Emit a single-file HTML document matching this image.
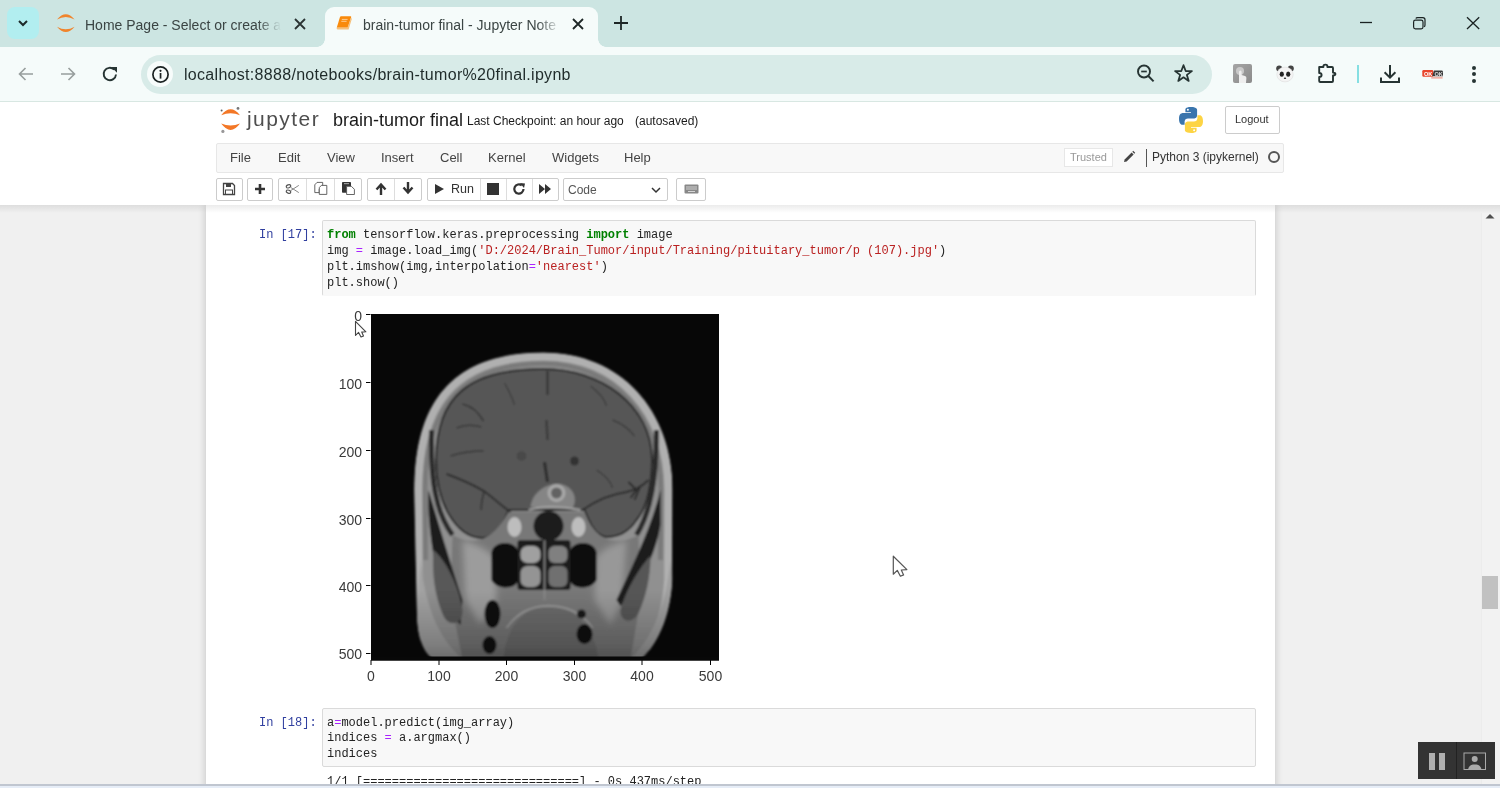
<!DOCTYPE html>
<html><head><meta charset="utf-8">
<style>
*{box-sizing:border-box}
html,body{margin:0;padding:0;width:1500px;height:788px;overflow:hidden;background:#f0f0f0;font-family:"Liberation Sans",sans-serif}
.a{position:absolute}
#tabs{left:0;top:0;width:1500px;height:47px;background:#cce5e2}
#toolbar{left:0;top:47px;width:1500px;height:54px;background:#f5fbfa}
#omni{left:141px;top:54.5px;width:1071px;height:39px;border-radius:19.5px;background:#d8ebe8}
.tabt{font-size:14px;color:#3b4544;white-space:nowrap;overflow:hidden;-webkit-mask-image:linear-gradient(90deg,#000 88%,transparent 100%);mask-image:linear-gradient(90deg,#000 88%,transparent 100%)}
#header{left:0;top:100.5px;width:1500px;height:104.5px;background:#fff;border-top:1.5px solid #d8e7e2}
#site{left:0;top:205px;width:1500px;height:583px;background:#f0f0f0;overflow:hidden}
#nb{left:206px;top:0;width:1069px;height:600px;background:#fff;box-shadow:0 0 8px rgba(0,0,0,.2)}
#hshadow{left:0;top:205px;width:1500px;height:8px;background:linear-gradient(rgba(0,0,0,.08),rgba(0,0,0,0))}
.menu{font-size:13px;color:#444;top:150px}
.btn{top:178px;height:23px;border:1px solid #ccc;border-radius:2px;background:#fff}
.code{font-family:"Liberation Mono",monospace;font-size:12px;line-height:15.8px;color:#222;white-space:pre}
.prompt{font-family:"Liberation Mono",monospace;font-size:12px;color:#303f9f;white-space:pre}
.cell{background:#f8f8f8;border:1px solid #dadada;border-radius:2px}
.k{color:#008000;font-weight:bold}
.o{color:#aa22ff}
.s{color:#ba2121}
.tick{font-size:14px;line-height:16px;color:#3a3a3a}
</style></head><body>
<div id="wrap" style="position:absolute;left:0;top:0;width:1500px;height:788px;overflow:hidden;filter:blur(0.4px)">
<!-- tab strip -->
<div id="tabs" class="a"></div>
<div class="a" style="left:7px;top:7px;width:32px;height:32px;border-radius:8px;background:#b2eef0"></div>
<svg class="a" style="left:17px;top:17px" width="12" height="12" viewBox="0 0 12 12"><path d="M2 4 L6 8 L10 4" fill="none" stroke="#1d2a2a" stroke-width="2"/></svg>
<!-- inactive tab -->
<svg class="a" style="left:50px;top:8px" width="30" height="30" viewBox="50 8 30 30"><path d="M57 19.6 Q65.8 9 74.6 19.6 Q65.8 14.5 57 19.6Z" fill="#f0842c"/><path d="M57 26.7 Q65.8 37.5 74.6 26.7 Q65.8 31.8 57 26.7Z" fill="#f0842c"/></svg>
<div class="a tabt" style="left:85px;top:16.5px;width:196px;height:20px">Home Page - Select or create a</div>
<svg class="a" style="left:293px;top:17px" width="14" height="14" viewBox="0 0 14 14"><path d="M2 2 L12 12 M12 2 L2 12" stroke="#2a3333" stroke-width="1.8"/></svg>
<!-- active tab -->
<div class="a" style="left:325px;top:7px;width:273px;height:41px;background:#f5fbfa;border-radius:9px 9px 0 0"></div>
<div class="a" style="left:317px;top:39px;width:8px;height:8px;background:radial-gradient(circle at 0 0,#cce5e2 7.5px,#f5fbfa 8px)"></div>
<div class="a" style="left:598px;top:39px;width:8px;height:8px;background:radial-gradient(circle at 100% 0,#cce5e2 7.5px,#f5fbfa 8px)"></div>
<svg class="a" style="left:334px;top:14px" width="20" height="18" viewBox="334 14 20 18"><path d="M336.8 27.6 H347.6 L351.2 17.8 L351.8 19 L348.6 29.6 H337.6 Q336.2 29.4 336.8 27.6Z" fill="#f6c07a"/><path d="M341 16.2 H350.6 Q351.4 16.2 351.1 17.2 L347.6 27.6 H336.8 L340 17Q340.3 16.2 341 16.2Z" fill="#f98a0b"/><path d="M341.8 19.4 H347.6 M341.3 21.3 H346.6" stroke="#fdd4a0" stroke-width="0.9"/></svg>
<div class="a tabt" style="left:363px;top:16.5px;width:198px;height:20px">brain-tumor final - Jupyter Note</div>
<svg class="a" style="left:571px;top:17px" width="14" height="14" viewBox="0 0 14 14"><path d="M2 2 L12 12 M12 2 L2 12" stroke="#1d2626" stroke-width="1.8"/></svg>
<svg class="a" style="left:613px;top:15px" width="16" height="16" viewBox="0 0 16 16"><path d="M8 1 V15 M1 8 H15" stroke="#1d2626" stroke-width="1.8"/></svg>
<!-- window controls -->
<svg class="a" style="left:1358px;top:15px" width="16" height="16" viewBox="0 0 16 16"><path d="M2 7.5 H14" stroke="#1a2222" stroke-width="1.3"/></svg>
<svg class="a" style="left:1411px;top:15px" width="16" height="16" viewBox="0 0 16 16"><rect x="2.6" y="5.2" width="9.4" height="8.6" rx="1.8" fill="none" stroke="#1a2222" stroke-width="1.2"/><path d="M4.8 3.4 Q5.2 2.6 6.6 2.6 H11.8 Q14 2.6 14 4.8 V10 Q14 11.3 13.1 11.8" fill="none" stroke="#1a2222" stroke-width="1.2"/></svg>
<svg class="a" style="left:1465px;top:15px" width="16" height="16" viewBox="0 0 16 16"><path d="M2 2.3 L14.2 14 M14.2 2.3 L2 14" stroke="#1a2222" stroke-width="1.3"/></svg>
<!-- toolbar -->
<div id="toolbar" class="a"></div>
<div id="omni" class="a"></div>
<div class="a" style="left:147px;top:61px;width:26px;height:26px;border-radius:13px;background:#f7fcfb"></div>
<div class="a" style="left:184px;top:65.5px;font-size:16px;letter-spacing:0.3px;color:#1f2b2a;white-space:nowrap">localhost:8888/notebooks/brain-tumor%20final.ipynb</div>
<!-- nav icons -->
<svg class="a" style="left:17px;top:65px" width="18" height="18" viewBox="0 0 18 18"><path d="M16 9 H3 M8.5 3 L2.5 9 L8.5 15" fill="none" stroke="#979e9d" stroke-width="1.6"/></svg>
<svg class="a" style="left:59px;top:65px" width="18" height="18" viewBox="0 0 18 18"><path d="M2 9 H15 M9.5 3 L15.5 9 L9.5 15" fill="none" stroke="#979e9d" stroke-width="1.6"/></svg>
<svg class="a" style="left:101px;top:65px" width="18" height="18" viewBox="0 0 18 18"><path d="M15 9.5 A6.2 6.2 0 1 1 13.2 4.6" fill="none" stroke="#263433" stroke-width="1.9"/><path d="M10.3 2 H16 V7.7Z" fill="#263433"/></svg>
<svg class="a" style="left:151px;top:65px" width="19" height="19" viewBox="0 0 19 19"><circle cx="9.5" cy="9.5" r="7.6" fill="none" stroke="#1a2222" stroke-width="1.7"/><rect x="8.7" y="8" width="1.7" height="5.6" fill="#1a2222"/><circle cx="9.5" cy="5.8" r="1.1" fill="#1a2222"/></svg>
<svg class="a" style="left:1135px;top:63px" width="22" height="22" viewBox="0 0 22 22"><circle cx="9" cy="8.5" r="6" fill="none" stroke="#263433" stroke-width="1.9"/><path d="M13.3 13 L18.6 18.4" stroke="#263433" stroke-width="2"/><path d="M6.2 8.5 H11.8" stroke="#263433" stroke-width="1.7"/></svg>
<svg class="a" style="left:1173px;top:63px" width="21" height="21" viewBox="0 0 21 21"><path d="M10.5 2.2 L12.7 8 L18.9 8.1 L13.9 11.9 L15.7 17.9 L10.5 14.3 L5.3 17.9 L7.1 11.9 L2.1 8.1 L8.3 8Z" fill="none" stroke="#263433" stroke-width="1.8" stroke-linejoin="round"/></svg>
<!-- extensions -->
<div class="a" style="left:1233px;top:64px;width:19px;height:19px;border-radius:2px;background:linear-gradient(135deg,#a5a5a5,#8a8a8a)"></div>
<svg class="a" style="left:1233px;top:64px" width="19" height="19" viewBox="0 0 19 19"><circle cx="7" cy="7" r="4" fill="#c9c9c9"/><path d="M6 19 V8 Q6 6.5 7.3 6.5 Q8.6 6.5 8.6 8 V11 L12 12 Q13.5 12.5 13.4 14 L13 19Z" fill="#eee"/></svg>
<svg class="a" style="left:1275px;top:64px" width="20" height="19" viewBox="0 0 20 19"><circle cx="4.2" cy="4.6" r="3" fill="#444"/><circle cx="15.8" cy="4.6" r="3" fill="#444"/><ellipse cx="10" cy="10.5" rx="8.2" ry="7.4" fill="#f4f4f4" stroke="#ddd" stroke-width="0.6"/><ellipse cx="6.8" cy="10.2" rx="2.1" ry="2.6" fill="#222"/><ellipse cx="13.2" cy="10.2" rx="2.1" ry="2.6" fill="#222"/><ellipse cx="10" cy="14.3" rx="1.2" ry="0.8" fill="#222"/></svg>
<svg class="a" style="left:1316px;top:62px" width="22" height="22" viewBox="0 0 22 22"><path d="M3.2 5 H7.4 Q7.2 2.6 9.4 2.6 Q11.6 2.6 11.4 5 H16 Q17 5 17 6 V10.6 Q19.4 10.6 19.4 12 Q19.4 13.4 17 13.4 V19 Q17 20 16 20 H4.2 Q3.2 20 3.2 19 V15 Q5.6 15 5.6 13 Q5.6 11 3.2 11Z" fill="none" stroke="#263433" stroke-width="1.9" stroke-linejoin="round"/></svg>
<div class="a" style="left:1357px;top:65px;width:2px;height:18px;background:#86dfe2"></div>
<svg class="a" style="left:1379px;top:63px" width="22" height="22" viewBox="0 0 22 22"><path d="M11 2 V14.5 M5.6 9.2 L11 14.6 L16.4 9.2" fill="none" stroke="#263433" stroke-width="2"/><path d="M2 14.5 V19 H20 V14.5" fill="none" stroke="#263433" stroke-width="2"/></svg>
<svg class="a" style="left:1420px;top:68px" width="26" height="13" viewBox="1420 68 26 13">
<rect x="1422.3" y="70.1" width="11" height="6.6" rx="1.2" fill="#e8452c"/>
<path d="M1434 70.6 H1441.6 Q1443 70.6 1443 72 V76.2 H1432.2Z" fill="#3a3a3a"/>
<rect x="1431.2" y="76.8" width="11.4" height="1.9" fill="#f2b3a8"/>
<text x="1424" y="75.8" font-family="Liberation Sans" font-weight="bold" font-size="5.6" fill="#fff">OK</text>
<text x="1434.5" y="75.6" font-family="Liberation Sans" font-weight="bold" font-size="5.6" fill="#ddd">OK</text>
</svg>
<div class="a" style="left:1472px;top:65.5px;width:4px;height:4px;border-radius:2px;background:#263433"></div>
<div class="a" style="left:1472px;top:72px;width:4px;height:4px;border-radius:2px;background:#263433"></div>
<div class="a" style="left:1472px;top:78.5px;width:4px;height:4px;border-radius:2px;background:#263433"></div>
<div id="header" class="a"></div>
<!-- jupyter logo -->
<svg class="a" style="left:215px;top:103px" width="30" height="32" viewBox="215 103 30 32">
<path d="M221.2 115.2 Q230.6 103.5 240 115.2 Q230.6 111.5 221.2 115.2Z" fill="#f37726"/>
<path d="M221.2 123.6 Q230.6 136.4 240 123.6 Q230.6 127.6 221.2 123.6Z" fill="#f37726"/>
<circle cx="238" cy="108.4" r="1.4" fill="#767677"/><circle cx="221.6" cy="110.6" r="1" fill="#616262"/><circle cx="222.9" cy="131.4" r="1.6" fill="#989798"/>
</svg>
<div class="a" style="left:247px;top:106.5px;font-size:21px;letter-spacing:1.45px;color:#4e4e4e">jupyter</div>
<div class="a" style="left:333px;top:110px;font-size:18px;color:#1a1a1a;white-space:nowrap">brain-tumor final</div>
<div class="a" style="left:467px;top:114px;font-size:12px;color:#1a1a1a;white-space:nowrap">Last Checkpoint: an hour ago</div>
<div class="a" style="left:635px;top:114px;font-size:12px;color:#1a1a1a;white-space:nowrap">(autosaved)</div>
<!-- python logo -->
<svg class="a" style="left:1177px;top:106px" width="28" height="28" viewBox="0 0 28 28">
<path d="M13.8 1 C8 1 8.4 3.5 8.4 3.5 V6.2 H14 V7 H6 C6 7 2 6.6 2 12.8 C2 19 5.5 18.8 5.5 18.8 H7.6 V15.9 C7.6 15.9 7.5 12.4 11 12.4 H16.8 C16.8 12.4 20.1 12.5 20.1 9.2 V3.9 C20.1 3.9 20.6 1 13.8 1Z" fill="#3a75ad"/>
<path d="M14.2 27 C20 27 19.6 24.5 19.6 24.5 V21.8 H14 V21 H22 C22 21 26 21.4 26 15.2 C26 9 22.5 9.2 22.5 9.2 H20.4 V12.1 C20.4 12.1 20.5 15.6 17 15.6 H11.2 C11.2 15.6 7.9 15.5 7.9 18.8 V24.1 C7.9 24.1 7.4 27 14.2 27Z" fill="#fdd444"/>
<circle cx="10.9" cy="3.8" r="1" fill="#fff"/><circle cx="17.1" cy="24.2" r="1" fill="#fff"/>
</svg>
<div class="a" style="left:1225px;top:106px;width:55px;height:28px;border:1px solid #ccc;border-radius:2px;background:#fff"></div>
<div class="a" style="left:1235px;top:113px;font-size:11px;color:#333">Logout</div>
<!-- menubar -->
<div class="a" style="left:216px;top:143px;width:1068px;height:30px;background:#f8f8f8;border:1px solid #e7e7e7;border-radius:2px"></div>
<div class="a menu" style="left:230px">File</div>
<div class="a menu" style="left:278px">Edit</div>
<div class="a menu" style="left:327px">View</div>
<div class="a menu" style="left:381px">Insert</div>
<div class="a menu" style="left:440px">Cell</div>
<div class="a menu" style="left:488px">Kernel</div>
<div class="a menu" style="left:552px">Widgets</div>
<div class="a menu" style="left:624px">Help</div>
<div class="a" style="left:1064px;top:148px;width:49px;height:19px;border:1px solid #e7e7e7;background:#fff"></div>
<div class="a" style="left:1070px;top:151px;font-size:11px;color:#999">Trusted</div>
<svg class="a" style="left:1122px;top:150px" width="14" height="14" viewBox="0 0 14 14"><path d="M2 12 L2.6 9.4 L9.6 2.4 L11.6 4.4 L4.6 11.4Z" fill="#444"/><path d="M10.3 1.7 L11.2 0.8 L13.2 2.8 L12.3 3.7Z" fill="#444"/></svg>
<div class="a" style="left:1146px;top:149px;width:1px;height:18px;background:#555"></div>
<div class="a" style="left:1152px;top:150px;font-size:12px;color:#333;white-space:nowrap">Python 3 (ipykernel)</div>
<div class="a" style="left:1268px;top:151px;width:12px;height:12px;border:2px solid #555;border-radius:50%"></div>
<!-- toolbar buttons -->
<div class="a btn" style="left:216px;width:27px"></div>
<div class="a btn" style="left:247px;width:26px"></div>
<div class="a btn" style="left:278px;width:84px"></div>
<div class="a" style="left:306px;top:179px;width:1px;height:21px;background:#ddd"></div>
<div class="a" style="left:334px;top:179px;width:1px;height:21px;background:#ddd"></div>
<div class="a btn" style="left:367px;width:55px"></div>
<div class="a" style="left:394px;top:179px;width:1px;height:21px;background:#ddd"></div>
<div class="a btn" style="left:427px;width:132px"></div>
<div class="a" style="left:480px;top:179px;width:1px;height:21px;background:#ddd"></div>
<div class="a" style="left:506px;top:179px;width:1px;height:21px;background:#ddd"></div>
<div class="a" style="left:532px;top:179px;width:1px;height:21px;background:#ddd"></div>
<div class="a btn" style="left:563px;width:105px"></div>
<div class="a" style="left:568px;top:183px;font-size:12px;color:#555">Code</div>
<svg class="a" style="left:650px;top:184px" width="12" height="12" viewBox="0 0 12 12"><path d="M2 4 L6 8 L10 4" fill="none" stroke="#333" stroke-width="1.5"/></svg>
<div class="a btn" style="left:676px;width:30px"></div>
<!-- icons -->
<svg class="a" style="left:222px;top:182px" width="14" height="14" viewBox="0 0 14 14"><path d="M1.5 1.5 H10.5 L12.5 3.5 V12.5 H1.5Z" fill="none" stroke="#444" stroke-width="1.3"/><rect x="4" y="1.5" width="5" height="3.5" fill="#444"/><rect x="3.5" y="8" width="7" height="4.5" fill="none" stroke="#444" stroke-width="1"/></svg>
<svg class="a" style="left:253px;top:182px" width="14" height="14" viewBox="0 0 14 14"><path d="M7 2 V12 M2 7 H12" stroke="#333" stroke-width="2.6"/></svg>
<svg class="a" style="left:284px;top:180px" width="80" height="18" viewBox="284 180 80 18">
<g transform="rotate(-20 288.5 186.3)"><ellipse cx="288.5" cy="186.3" rx="2.3" ry="1.5" fill="none" stroke="#555" stroke-width="1.1"/></g>
<g transform="rotate(20 288.5 191.7)"><ellipse cx="288.5" cy="191.7" rx="2.3" ry="1.5" fill="none" stroke="#555" stroke-width="1.1"/></g>
<path d="M290.5 187.3 L298.8 192.6 M290.5 190.7 L298.8 185.4" stroke="#888" stroke-width="1"/>
<path d="M317 182.4 H322.7 V186 L319.2 189.5 V192.6 H314.8 V184.8Z" fill="#fff" stroke="#555" stroke-width="0.9" stroke-linejoin="round"/>
<path d="M321.3 185.4 H326.8 V194.4 H319.3 V187.6Z" fill="#fff" stroke="#555" stroke-width="0.9" stroke-linejoin="round"/>
<rect x="342" y="182" width="9" height="10.8" rx="0.8" fill="#333"/>
<rect x="344" y="183" width="5" height="1.2" fill="#999"/>
<path d="M346.6 186.3 H351.4 L354.4 189.3 V194.5 H346.6Z" fill="#fff" stroke="#555" stroke-width="0.9" stroke-linejoin="round"/>
</svg>
<svg class="a" style="left:374px;top:182px" width="14" height="14" viewBox="0 0 14 14"><path d="M7 13 V3 M2.5 7.5 L7 2.5 L11.5 7.5" fill="none" stroke="#333" stroke-width="2.4"/></svg>
<svg class="a" style="left:401px;top:181px" width="14" height="14" viewBox="0 0 14 14"><path d="M7 1 V11 M2.5 6.5 L7 11.5 L11.5 6.5" fill="none" stroke="#333" stroke-width="2.4"/></svg>
<svg class="a" style="left:433px;top:183px" width="12" height="12" viewBox="0 0 12 12"><path d="M2 1 L11 6 L2 11Z" fill="#333"/></svg>
<div class="a" style="left:451px;top:182px;font-size:12.5px;color:#333">Run</div>
<div class="a" style="left:487px;top:183px;width:12px;height:12px;background:#333"></div>
<svg class="a" style="left:512px;top:182px" width="14" height="14" viewBox="0 0 14 14"><path d="M11.5 7 A4.6 4.6 0 1 1 9.8 3.4" fill="none" stroke="#333" stroke-width="2.2"/><path d="M8 1 L13 1.5 L12 6Z" fill="#333"/></svg>
<svg class="a" style="left:538px;top:183px" width="14" height="12" viewBox="0 0 14 12"><path d="M1 1 L7 6 L1 11Z M7 1 L13 6 L7 11Z" fill="#333"/></svg>
<svg class="a" style="left:684px;top:184px" width="15" height="10" viewBox="0 0 15 10"><rect x="0.5" y="0.5" width="14" height="9" rx="1" fill="#888"/><path d="M2 3 H13 M2 5 H13 M4 7.5 H11" stroke="#ddd" stroke-width="0.9"/></svg>
<div id="site" class="a"><div id="nb" class="a"></div></div>
<div id="hshadow" class="a"></div>
<!-- cell 17 -->
<div class="a prompt" style="left:259px;top:228.3px;line-height:15.8px">In [17]:</div>
<div class="a cell" style="left:322px;top:220px;width:934px;height:75.5px;border-bottom-color:transparent"></div>
<div class="a code" style="left:327px;top:228.3px"><span class="k">from</span> tensorflow.keras.preprocessing <span class="k">import</span> image
img <span class="o">=</span> image.load_img(<span class="s">'D:/2024/Brain_Tumor/input/Training/pituitary_tumor/p (107).jpg'</span>)
plt.imshow(img,interpolation<span class="o">=</span><span class="s">'nearest'</span>)
plt.show()</div>
<!-- figure -->
<svg class="a" style="left:330px;top:300px" width="400" height="390" viewBox="330 300 400 390">
<g stroke="#000" stroke-width="1">
<path d="M366 314.5 H370.5 M366 382.5 H370.5 M366 450.5 H370.5 M366 518.5 H370.5 M366 585.5 H370.5 M366 653.5 H370.5"/>
<path d="M371 660 V665 M439 660 V665 M506.5 660 V665 M574.5 660 V665 M642 660 V665 M710.5 660 V665"/>
</g>
</svg>
<div class="a tick" style="left:322px;top:308.3px;width:40px;text-align:right">0</div>
<div class="a tick" style="left:322px;top:375.8px;width:40px;text-align:right">100</div>
<div class="a tick" style="left:322px;top:443.8px;width:40px;text-align:right">200</div>
<div class="a tick" style="left:322px;top:511.8px;width:40px;text-align:right">300</div>
<div class="a tick" style="left:322px;top:578.8px;width:40px;text-align:right">400</div>
<div class="a tick" style="left:322px;top:646.3px;width:40px;text-align:right">500</div>
<div class="a tick" style="left:351.0px;top:668px;width:40px;text-align:center">0</div>
<div class="a tick" style="left:419.0px;top:668px;width:40px;text-align:center">100</div>
<div class="a tick" style="left:486.5px;top:668px;width:40px;text-align:center">200</div>
<div class="a tick" style="left:554.5px;top:668px;width:40px;text-align:center">300</div>
<div class="a tick" style="left:622.0px;top:668px;width:40px;text-align:center">400</div>
<div class="a tick" style="left:690.5px;top:668px;width:40px;text-align:center">500</div>
<!--MRI--><svg class="a" style="left:370.5px;top:314px" width="348" height="346.5" viewBox="370.5 314 348 346.5">
<defs>
<filter id="b1" x="-10%" y="-10%" width="120%" height="120%"><feGaussianBlur stdDeviation="1.3"/></filter>
<filter id="b3" x="-30%" y="-30%" width="160%" height="160%"><feGaussianBlur stdDeviation="3"/></filter>
<clipPath id="hc"><path d="M543 352.5 C620 352.5 672 410 672 490 L671.7 580 C670 612 660 640 641 659 L432 659 C421 650 417 635 416.5 614 L413.7 490 C413.7 410 445 352.5 543 352.5Z"/></clipPath>
<linearGradient id="bot" x1="0" y1="0" x2="0" y2="1"><stop offset="0" stop-color="#000" stop-opacity="0"/><stop offset="0.75" stop-color="#000" stop-opacity="0.22"/><stop offset="1" stop-color="#000" stop-opacity="0.35"/></linearGradient>
</defs>
<rect x="370.5" y="314" width="348" height="346.5" fill="#070707"/>
<g filter="url(#b1)"><g clip-path="url(#hc)">
<!-- head outer contour -->
<path d="M543 352.5 C620 352.5 672 410 672 490 L671.7 580 C670 612 660 640 641 659 L432 659 C421 650 417 635 416.5 614 L413.7 490 C413.7 410 445 352.5 543 352.5Z" fill="#909090"/>
<!-- skull band -->
<path d="M421 640 L418 580 L417.7 490 C417.7 412 447 356.5 543 356.5 C618 356.5 668 412 668 490 L667.7 580 C666 610 658 632 646 648" fill="none" stroke="#b0b0b0" stroke-width="8"/>
<path d="M425 560 L424.5 490 C424.5 416 454 363.5 543 363.5 C612 363.5 660.5 416 660.5 490 L660 560" fill="none" stroke="#7a7a7a" stroke-width="5"/>
<!-- brain -->
<path id="brain" d="M543 369 C600 369 651 405 651.5 460 C651 490 646 508 636 520 C628 532 618 537 606 537 C594 536 588 520 584 510 L508 510 C504 522 496 537 482 538 C468 538 456 528 447 512 C438 495 435.6 478 435.6 460 C435.6 395 470 369 543 369Z" fill="#575757"/>
<use href="#brain" fill="none" stroke="#262626" stroke-width="2"/>
<!-- side dark gap between brain and skull -->
<path d="M431 430 C430 480 435 512 452 535" fill="none" stroke="#2a2a2a" stroke-width="5"/>
<path d="M656 430 C656 480 650 512 636 535" fill="none" stroke="#2a2a2a" stroke-width="5"/>
<!-- lower central soft tissue -->
<path d="M452 535 C470 545 490 545 508 512 L584 512 C596 545 620 545 638 535 L640 600 L630 659 L462 659 L450 600Z" fill="#787878"/>
<g filter="url(#b3)"><path d="M462 540 C475 545 488 548 495 560 L496 600 L480 625 L465 600Z" fill="#9c9c9c"/>
<path d="M626 540 C613 545 600 548 595 560 L594 600 L610 625 L622 600Z" fill="#989898"/></g>
<!-- lower outer face light band -->
<path d="M420 560 C425 610 440 640 462 659 L432 659 C421 650 417 635 416.5 614Z" fill="#a2a2a2"/>
<path d="M670 560 C665 610 650 640 630 659 L641 658.5 C660 640 670 615 673 580Z" fill="#a0a0a0"/>
<!-- temporalis dark stripes + muscle -->
<path d="M428 490 C440 530 452 570 462 600 L460 625 C447 612 438 585 433 555 C429 530 427 510 428 490Z" fill="#1e1e1e"/>
<path d="M433 550 C445 560 458 585 462 610 C463 624 449 628 443 616 C436 600 431 580 433 550Z" fill="#585858"/>
<path d="M660 490 C650 530 630 570 616 600 L620 606 C640 585 655 555 660 525Z" fill="#1e1e1e"/>
<path d="M650 556 C640 566 625 590 620 610 C619 622 632 625 638 613 C645 598 650 578 650 556Z" fill="#575757"/>
<!-- sinuses -->
<path d="M491 552 C494 540 515 540 518 552 L518 580 C515 590 496 590 491 580Z" fill="#0a0a0a"/>
<path d="M596 552 C593 540 572 540 569 552 L569 580 C572 590 591 590 596 580Z" fill="#0a0a0a"/>
<!-- nasal -->
<rect x="517" y="540" width="53" height="50" rx="3" fill="#1c1c1c"/>
<rect x="520" y="546" width="20" height="17" rx="7" fill="#a0a0a0"/>
<rect x="520" y="566" width="20" height="21" rx="7" fill="#949494"/>
<rect x="548" y="546" width="19" height="17" rx="6" fill="#808080"/>
<rect x="548" y="566" width="19" height="21" rx="6" fill="#707070"/>
<path d="M544 540 V600" stroke="#8a8a8a" stroke-width="1.5"/>
<!-- bright clinoid structures -->
<ellipse cx="514" cy="527" rx="7" ry="10" fill="#bdbdbd"/>
<ellipse cx="578" cy="527" rx="7" ry="10" fill="#bdbdbd"/>
<ellipse cx="548" cy="526" rx="15" ry="15" fill="#1e1e1e"/>
<!-- tongue -->
<path d="M503 659 C505 627 525 605 548 605 C572 605 594 627 598 659Z" fill="#6c6c6c"/>
<path d="M506 628 C517 612 533 606 548 606 C564 606 582 612 592 628" fill="none" stroke="#999" stroke-width="2"/>
<!-- dark spots lower -->
<ellipse cx="492" cy="614" rx="8" ry="14" fill="#121212"/>
<ellipse cx="489" cy="645" rx="7" ry="9" fill="#121212"/>
<ellipse cx="581" cy="614" rx="4.5" ry="4.5" fill="#1c1c1c"/>
<ellipse cx="584" cy="634" rx="8" ry="10" fill="#121212"/>
<!-- tumor -->
<path d="M530 507 C532 492 545 484 558 484 C572 485 578 498 572 508Z" fill="#858585"/>
<circle cx="556" cy="493" r="9" fill="#a8a8a8"/>
<circle cx="556" cy="493" r="5.5" fill="#626262"/>
<path d="M528 510 C540 506 560 506 580 510" fill="none" stroke="#a5a5a5" stroke-width="1.8"/>
<!-- midline + sulci -->
<path d="M547 371 L547 395" stroke="#2e2e2e" stroke-width="2"/>
<path d="M546 420 L547 440" stroke="#3a3a3a" stroke-width="2.5"/>
<path d="M544 462 L547 482" stroke="#2a2a2a" stroke-width="3"/>
<circle cx="574" cy="461" r="4.5" fill="#333"/>
<circle cx="521" cy="456" r="5" fill="#4a4a4a"/>
<path d="M462 404 C470 406 478 412 483 421" fill="none" stroke="#333" stroke-width="1.6"/>
<path d="M456 428 C465 424 474 425 481 427" fill="none" stroke="#383838" stroke-width="1.4"/>
<path d="M450 456 C462 452 472 451 483 451" fill="none" stroke="#363636" stroke-width="1.4"/>
<path d="M446 474 C462 480 476 486 486 493 C495 500 503 507 510 512" fill="none" stroke="#2c2c2c" stroke-width="2"/>
<path d="M484 490 C482 498 480 504 481 510" fill="none" stroke="#303030" stroke-width="1.6"/>
<path d="M504 383 C508 390 512 398 514 405" fill="none" stroke="#3c3c3c" stroke-width="1.4"/>
<path d="M590 386 C598 392 604 398 606 406" fill="none" stroke="#3c3c3c" stroke-width="1.4"/>
<path d="M612 420 C620 423 628 428 634 436" fill="none" stroke="#3a3a3a" stroke-width="1.4"/>
<path d="M582 510 C596 500 612 494 626 492 C636 490 642 486 648 480" fill="none" stroke="#2c2c2c" stroke-width="2"/>
<path d="M628 482 L636 490 L630 498 M640 486 L634 500" fill="none" stroke="#262626" stroke-width="1.8"/>
<path d="M596 470 C604 475 610 480 612 488" fill="none" stroke="#383838" stroke-width="1.3"/>
<rect x="370" y="590" width="350" height="72" fill="url(#bot)"/>
</g></g>
<rect x="370.5" y="656.5" width="348" height="4" fill="#080808"/>
</svg>
<!--/MRI-->
<!-- cell 18 -->
<div class="a prompt" style="left:259px;top:715.5px;line-height:15.8px">In [18]:</div>
<div class="a cell" style="left:322px;top:708px;width:934px;height:59px"></div>
<div class="a code" style="left:327px;top:715.5px">a<span class="o">=</span>model.predict(img_array)
indices <span class="o">=</span> a.argmax()
indices</div>
<div class="a code" style="left:327px;top:775.3px">1/1 [==============================] - 0s 437ms/step</div>
<!-- cursors -->
<svg class="a" style="left:892px;top:555px" width="17" height="24" viewBox="0 0 17 24"><path d="M1.3 1.2 L1.3 19.2 L5.3 15.4 L8.4 21.2 L11.6 19.9 L9.3 15 L14.9 14.6Z" fill="#fff" stroke="#555" stroke-width="1.2" stroke-linejoin="round"/></svg>
<svg class="a" style="left:354px;top:320px" width="14" height="19" viewBox="0 0 14 19"><path d="M1.5 1.3 L1.5 15.4 L4.6 12.4 L7 17 L9.5 16 L7.7 12.1 L11.9 11.8Z" fill="#fff" stroke="#444" stroke-width="1.1" stroke-linejoin="round"/></svg>
<!-- bottom bar -->
<div class="a" style="left:0;top:784.3px;width:1500px;height:3.7px;background:linear-gradient(#c0c6d0 0,#c0c6d0 55%,#e6edf7 56%)"></div>
<!-- scrollbar -->
<div class="a" style="left:1481px;top:213px;width:19px;height:571px;background:#f2f2f2;border-left:1px solid #ececec"></div>
<svg class="a" style="left:1484px;top:211px" width="12" height="10" viewBox="0 0 12 10"><path d="M1.5 7.5 L6 3 L10.5 7.5Z" fill="#505050"/></svg>
<div class="a" style="left:1482px;top:576px;width:16px;height:33px;background:#c1c1c1"></div>
<!-- media overlay -->
<div class="a" style="left:1418px;top:742px;width:77px;height:37px;background:#333"></div>
<div class="a" style="left:1456px;top:742px;width:1px;height:37px;background:#222"></div>
<div class="a" style="left:1428.5px;top:753px;width:6px;height:17px;background:#b0b0b0"></div>
<div class="a" style="left:1439px;top:753px;width:6px;height:17px;background:#b0b0b0"></div>
<svg class="a" style="left:1463px;top:752px" width="24" height="19" viewBox="0 0 24 19"><rect x="1" y="1" width="21.5" height="16.5" fill="none" stroke="#aaa" stroke-width="1"/><circle cx="11.7" cy="7" r="3" fill="#aaa"/><path d="M5 17.5 Q6 13 10 12.5 H13.5 Q17.5 13 18.5 17.5Z" fill="#aaa"/></svg>
</div>
</body></html>
